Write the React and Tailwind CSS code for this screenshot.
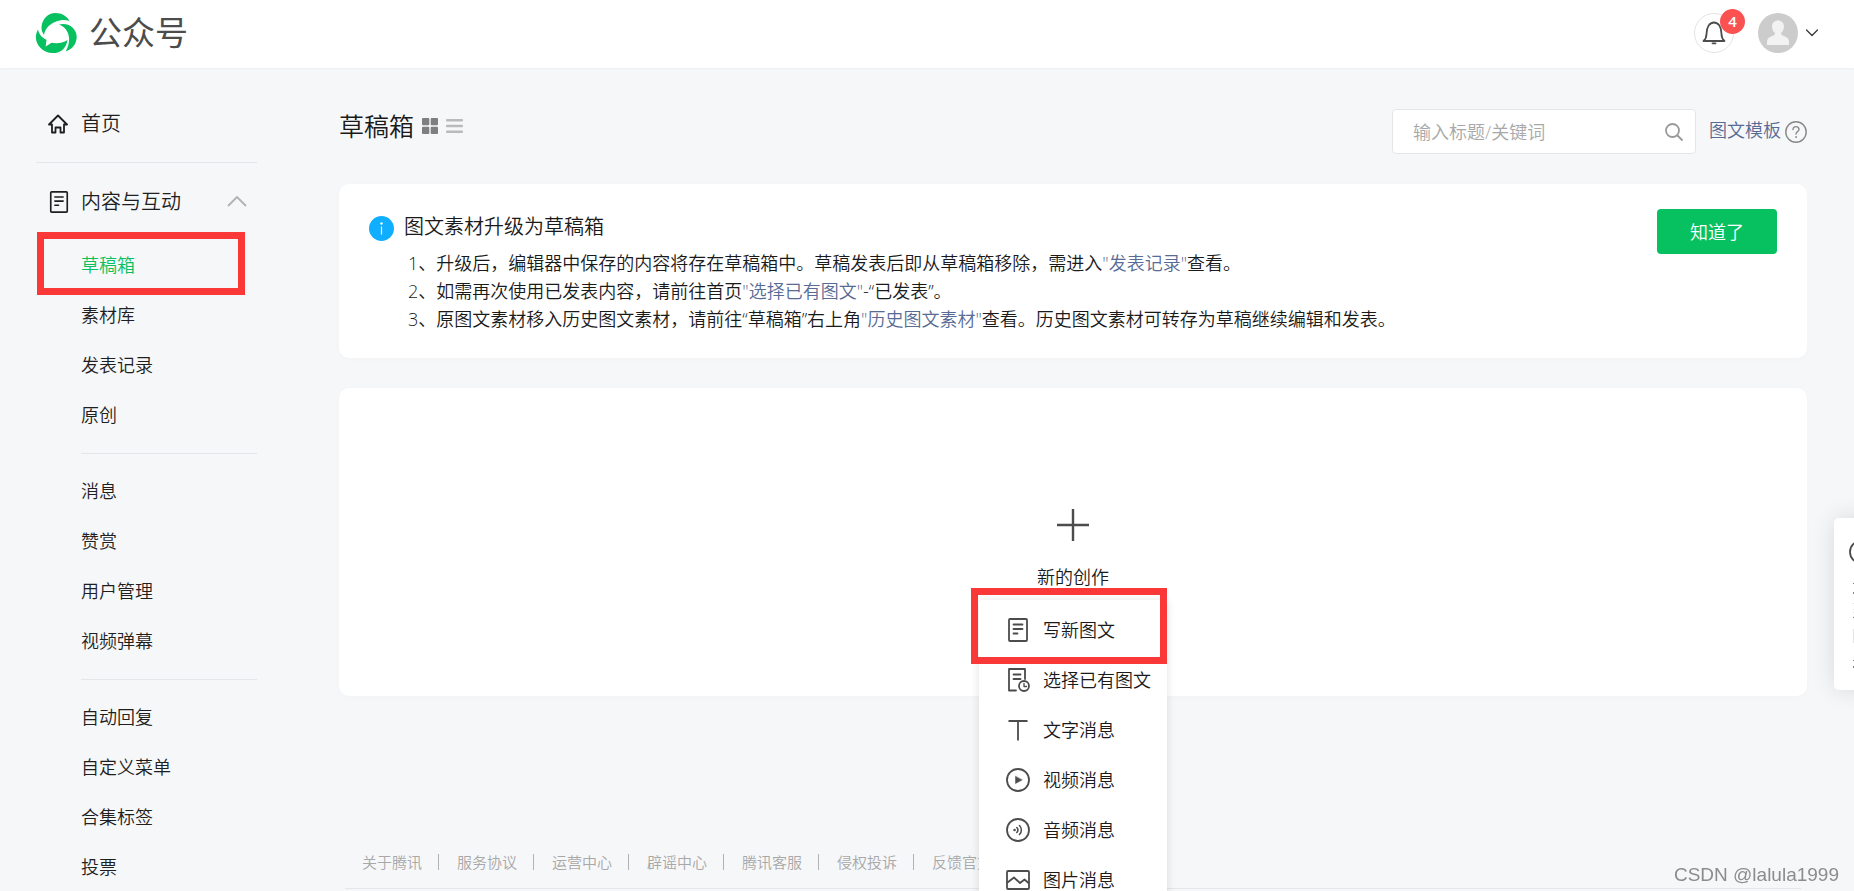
import clsx from 'clsx';

const LINE = { fill: 'none', stroke: 'currentColor', strokeWidth: 1.8, strokeLinejoin: 'round', strokeLinecap: 'round' };

const mainMenu = [
  ['草稿箱', '素材库', '发表记录', '原创'],
  ['消息', '赞赏', '用户管理', '视频弹幕'],
  ['自动回复', '自定义菜单', '合集标签', '投票'],
];

const footerLinks = ['关于腾讯', '服务协议', '运营中心', '辟谣中心', '腾讯客服', '侵权投诉', '反馈官方'];

function LogoIcon() {
  return (
    <svg className="w-[42px] h-10 text-[#07c160]" viewBox="0 0 42 40" fill="currentColor">
      <path d="M6.500 14C7 6 13 0 20.500 0C27 0 32 3.500 34.500 8C31 6.800 28 6.800 25 7.500C16 9 10 15 9 22C7.300 19.500 6.300 17 6.500 14Z" />
      <path d="M24 11.500C34 9 42 16 41.700 24.500C41.300 31.500 37 36.500 30.700 38.300C36.500 29 35.500 16 24 11.500Z" />
      <path d="M3 16.500C4 21 7 25 11.500 26.800L10.700 33.500L16.500 29.800C22 30.800 28 30 32.500 27C31.500 33 28.500 37 24 39C22 40 19.500 40 17.500 40C6 40-3.500 28 3 16.500Z" />
    </svg>
  );
}

function HomeIcon() {
  return (
    <svg className="w-5 h-5" viewBox="0 0 20 20" {...LINE}>
      <path d="M1 10.500L10 1.500L19 10.500H16V18.500H12.500V13.500H7.500V18.500H4V10.500Z" />
    </svg>
  );
}

function ArticleIcon({ className }) {
  return (
    <svg className={className} viewBox="0 0 24 24" {...LINE}>
      <rect x="3" y="1" width="18" height="22" rx="1" />
      <path d="M7.500 6.500H16.500M7.500 11H16.500M7.500 15.500H11.500" />
    </svg>
  );
}

function HistoryIcon() {
  return (
    <svg className="w-6 h-6" viewBox="0 0 24 24" {...LINE}>
      <path d="M10 22.500H3V1H19V11" />
      <path d="M7.500 6.500H14.500M7.500 11H14.500" />
      <circle cx="18" cy="18" r="5" />
      <path d="M18 15.500V18.500H20.500" strokeWidth="1.300" />
    </svg>
  );
}

function TextIcon() {
  return (
    <svg className="w-6 h-6" viewBox="0 0 24 24" {...LINE} strokeLinecap="butt">
      <path d="M2.500 3H21.500M12 3V22.500" />
    </svg>
  );
}

function VideoIcon() {
  return (
    <svg className="w-6 h-6" viewBox="0 0 24 24" {...LINE}>
      <circle cx="12" cy="12" r="11" />
      <path d="M9.500 8.500V15.500L16 12Z" fill="currentColor" strokeWidth="0.500" />
    </svg>
  );
}

function AudioIcon() {
  return (
    <svg className="w-6 h-6" viewBox="0 0 24 24" {...LINE}>
      <circle cx="12" cy="12" r="11" />
      <circle cx="8.500" cy="12" r="1" fill="currentColor" strokeWidth="0.500" />
      <path d="M10.800 9.500C12.200 11 12.200 13 10.800 14.500M13.500 7.500C16 10 16 14 13.500 16.500" strokeWidth="1.500" />
    </svg>
  );
}

function ImageIcon() {
  return (
    <svg className="w-6 h-6" viewBox="0 0 24 24" {...LINE}>
      <rect x="1" y="3" width="22" height="18" rx="1" />
      <path d="M1.500 14.500L8 9.500L14 15L18.500 11.500L22.500 15" />
    </svg>
  );
}

const createItems = [
  { label: '写新图文', icon: <ArticleIcon className="w-6 h-6" /> },
  { label: '选择已有图文', icon: <HistoryIcon /> },
  { label: '文字消息', icon: <TextIcon /> },
  { label: '视频消息', icon: <VideoIcon /> },
  { label: '音频消息', icon: <AudioIcon /> },
  { label: '图片消息', icon: <ImageIcon /> },
];

function Header() {
  return (
    <header className="flex items-center justify-between h-17 pl-[35px] pr-9 pb-0.5 bg-white shadow-[0_1px_2px_rgba(0,0,0,0.04)]">
      <a href="#" className="flex items-center gap-3 text-[#4c4c4c]">
        <LogoIcon />
        <span className="text-[33px] leading-10 font-normal">公众号</span>
      </a>
      <div className="flex items-center">
        <button aria-label="通知" className="relative flex items-center justify-center w-10 h-10 rounded-full border border-[#e4e4e6] text-[#4c4c4c]">
          <svg className="w-6 h-6" viewBox="0 0 24 24" {...LINE}>
            <path d="M1.500 20C4 18 4.500 16 4.500 13C4.500 6 7.500 1.500 12 1.500S19.500 6 19.500 13C19.500 16 20 18 22.500 20Z" />
            <path d="M10.500 22.300H13.500" />
          </svg>
          <span className="absolute -top-[5px] -right-3 w-[25px] h-[25px] rounded-full bg-[#fa5151] text-white text-[15px] leading-[25px] font-semibold text-center">4</span>
        </button>
        <button aria-label="账号" className="flex items-center gap-2 ml-6">
          <svg className="w-10 h-10" viewBox="0 0 40 40">
            <circle cx="20" cy="20" r="20" fill="#ccc" />
            <path d="M20 7.500C16.500 7.500 14 10 14 13.500C14 16.500 15.500 19 17 20C17 22 15.500 22.500 13 23.500C10 24.800 9 26.500 9 29V32H31V29C31 26.500 30 24.800 27 23.500C24.500 22.500 23 22 23 20C24.500 19 26 16.500 26 13.500C26 10 23.500 7.500 20 7.500Z" fill="#f2f2f2" />
          </svg>
          <svg className="w-3 h-2 text-[#333]" viewBox="0 0 12 8" {...LINE} strokeWidth="1.200">
            <path d="M0.500 1L6 6.500L11.500 1" />
          </svg>
        </button>
      </div>
    </header>
  );
}

function Sidebar() {
  return (
    <nav className="w-[221px] shrink-0 text-[#1f1f1f]">
      <a href="#" className="flex items-center gap-[13px] h-[50px] pl-3 text-xl">
        <HomeIcon />
        <span>首页</span>
      </a>
      <div className="mt-[13px] mb-[14px] border-t border-[#e4e6e9]" />
      <button className="flex items-center w-full h-[50px] pl-3 pr-[10px] text-xl">
        <ArticleIcon className="w-[22px] h-[22px]" />
        <span className="ml-[11px]">内容与互动</span>
        <svg className="w-5 h-3 ml-auto mb-0.5 text-[#b2b2b2]" viewBox="0 0 20 12" {...LINE} strokeLinecap="butt">
          <path d="M1 11L10 2L19 11" />
        </svg>
      </button>
      {mainMenu.map((group, i) => (
        <ul key={group[0]} className={clsx('ml-[45px] mt-[13px]', i > 0 && 'pt-3 border-t border-[#e4e6e9]')}>
          {group.map(label => (
            <li key={label} className="relative">
              {label === '草稿箱' && (
                <div className="absolute -left-11 right-3 -top-2 h-[63px] border-[7px] border-[#fb3838] pointer-events-none" />
              )}
              <a
                href="#"
                className={clsx('flex items-center h-[50px] text-lg', label === '草稿箱' && 'text-[#07c160]')}
              >
                {label}
              </a>
            </li>
          ))}
        </ul>
      ))}
    </nav>
  );
}

function Toolbar() {
  return (
    <div className="flex items-start justify-between">
      <div className="flex items-center h-[34px] gap-2">
        <h1 className="text-[25px] leading-8 text-[#1a1a1a]">草稿箱</h1>
        <button aria-label="卡片视图" className="text-[#7f7f7f]">
          <svg className="w-4 h-4" viewBox="0 0 16 16" fill="currentColor">
            <rect width="7.300" height="7.300" rx="1" />
            <rect x="8.700" width="7.300" height="7.300" rx="1" />
            <rect y="8.700" width="7.300" height="7.300" rx="1" />
            <rect x="8.700" y="8.700" width="7.300" height="7.300" rx="1" />
          </svg>
        </button>
        <button aria-label="列表视图" className="text-[#b9babb]">
          <svg className="w-[17px] h-4" viewBox="0 0 17 16" fill="currentColor">
            <rect y="1" width="17" height="2.500" rx="1" />
            <rect y="6.700" width="17" height="2.500" rx="1" />
            <rect y="12.400" width="17" height="2.500" rx="1" />
          </svg>
        </button>
      </div>
      <div className="flex items-center gap-[13px]">
        <label className="flex items-center w-[304px] h-[45px] px-3 bg-white border border-[#e4e6e9] rounded-[4px]">
          <input
            type="text"
            aria-label="搜索"
            placeholder="输入标题/关键词"
            className="flex-1 min-w-0 pl-2 text-lg outline-none placeholder:text-[#a8a8a8]"
          />
          <svg className="w-[18px] h-[18px] text-[#9a9a9a]" viewBox="0 0 18 18" {...LINE}>
            <circle cx="7.500" cy="7.500" r="6.500" />
            <path d="M12.500 12.500L17 17" />
          </svg>
        </label>
        <div className="flex items-center gap-1">
          <a href="#" className="pb-1 text-lg text-[#576b95]">图文模板</a>
          <button aria-label="帮助" className="text-[#888]">
            <svg className="w-[22px] h-[22px]" viewBox="0 0 22 22" {...LINE} strokeWidth="1.400">
              <circle cx="11" cy="11" r="10.200" />
              <path d="M8 8.500C8 6.500 9.300 5.600 11 5.600S14 6.700 14 8.400C14 10.300 11 10.700 11 13" />
              <circle cx="11" cy="16" r="0.500" fill="currentColor" strokeWidth="0.800" />
            </svg>
          </button>
        </div>
      </div>
    </div>
  );
}

function Notice() {
  return (
    <section className="flex items-start mt-[30px] px-[30px] py-[25px] bg-white rounded-[10px] shadow-[0_1px_6px_rgba(0,0,0,0.02)]">
      <svg className="w-[25px] h-[25px] mt-[7px] shrink-0" viewBox="0 0 25 25">
        <circle cx="12.500" cy="12.500" r="12.500" fill="#10aeff" />
        <path d="M12.500 10.500V18.500" stroke="#fff" strokeWidth="1.200" />
        <circle cx="12.500" cy="7.500" r="1.200" fill="#fff" />
      </svg>
      <div className="flex-1 ml-[10px] text-[#1a1a1a]">
        <h2 className="text-xl leading-9">图文素材升级为草稿箱</h2>
        <ol className="pl-1 mt-1 text-lg leading-7">
          <li>1、升级后，编辑器中保存的内容将存在草稿箱中。草稿发表后即从草稿箱移除，需进入<a href="#" className="text-[#576b95]">"发表记录"</a>查看。</li>
          <li>2、如需再次使用已发表内容，请前往首页<a href="#" className="text-[#576b95]">"选择已有图文"</a>-“已发表”。</li>
          <li>3、原图文素材移入历史图文素材，请前往“草稿箱”右上角<a href="#" className="text-[#576b95]">"历史图文素材"</a>查看。历史图文素材可转存为草稿继续编辑和发表。</li>
        </ol>
      </div>
      <button className="w-30 h-[45px] rounded-[4px] bg-[#07c160] text-white text-lg">知道了</button>
    </section>
  );
}

function CreateCard() {
  return (
    <section className="flex flex-col items-center mt-[30px] h-[308px] pt-[121px] bg-white rounded-[10px] shadow-[0_1px_6px_rgba(0,0,0,0.02)]">
      <div className="relative flex flex-col items-center text-[#1a1a1a]">
        <svg className="w-8 h-8 text-[#4c4c4c]" viewBox="0 0 32 32" stroke="currentColor" strokeWidth="2.400">
          <path d="M0 16H32M16 0V32" />
        </svg>
        <span className="mt-5 text-lg leading-8">新的创作</span>
        {/* dropdown */}
        <div className="absolute top-[91px] left-1/2 -translate-x-1/2 w-[188px] z-10 bg-white rounded-[4px] shadow-[0_1px_10px_rgba(0,0,0,0.12)]">
          <ul className="pt-[5px] pb-2">
            {createItems.map(item => (
              <li key={item.label}>
                <button className="flex items-center w-full h-[50px] pl-[27px] gap-[13px] text-lg whitespace-nowrap">
                  <span className="text-[#4c4c4c]">{item.icon}</span>
                  {item.label}
                </button>
              </li>
            ))}
          </ul>
          <div className="absolute -left-2 right-0 -top-3 h-19 border-[7px] border-[#fb3838] pointer-events-none" />
        </div>
      </div>
    </section>
  );
}

function Footer() {
  return (
    <footer className="mt-[150px] mx-[6px] pb-[10px] border-b border-[#e4e6e9] text-[15px] leading-8 text-[#a8a8a8]">
      <ul className="flex pl-[17px]">
        {footerLinks.map((label, i) => (
          <li key={label} className="flex items-center">
            {i > 0 && <span className="w-px h-4 ml-4 mr-[18px] bg-[#b2b2b2]" />}
            <a href="#">{label}</a>
          </li>
        ))}
      </ul>
    </footer>
  );
}

function FloatPanel() {
  return (
    <aside className="fixed top-[518px] -right-[60px] w-20 h-[172px] pl-[15px] pt-[22px] bg-white rounded-[5px] shadow-[0_0_25px_rgba(0,0,0,0.12)] text-[#4c4c4c]">
      <svg className="w-6 h-6" viewBox="0 0 24 24" {...LINE}>
        <circle cx="12" cy="12" r="11" />
      </svg>
      <svg className="w-6 h-[90px] mt-[18px]" viewBox="0 0 24 90" fill="currentColor">
        <path d="M4 1H8V2H4ZM4 10H8V12H4ZM4 35H8V36H4ZM4 78H8V79H4ZM4 84H8V86H4Z" opacity="0.700" />
        <path d="M4 21H8V22H4ZM4 27H8V28H4ZM4 30H8V31H4ZM4 47H8V61H4Z" opacity="0.150" />
      </svg>
    </aside>
  );
}

export default function App() {
  return (
    <div className="h-screen overflow-hidden bg-[#f6f7f9] font-[350] font-['Open_Sans','Noto_Sans_CJK_SC',sans-serif]">
      <Header />
      <div className="flex pl-9 pr-[47px] pt-[31px]">
        <Sidebar />
        <main className="flex-1 min-w-0 ml-[82px] pt-[10px]">
          <Toolbar />
          <Notice />
          <CreateCard />
          <Footer />
        </main>
      </div>
      <FloatPanel />
      <div className="fixed right-[15px] bottom-[2px] font-['Liberation_Sans',sans-serif] font-normal text-[19px] text-[#8c8c8c]">CSDN @lalula1999</div>
    </div>
  );
}
